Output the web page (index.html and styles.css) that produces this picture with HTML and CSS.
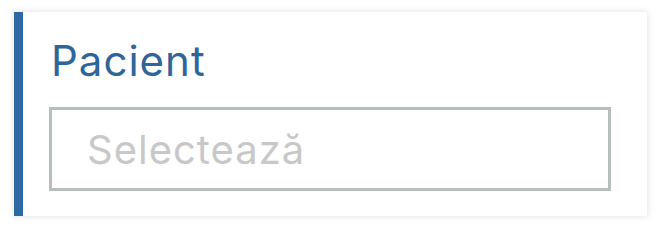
FILE: index.html
```html
<!DOCTYPE html>
<html lang="ro">
<head>
<meta charset="utf-8">
<link rel="stylesheet" href="styles.css">
</head>
<body>
<div class="card">
  <label class="label" for="pacient">Pacient</label>
  <div class="select" id="pacient">
    <span class="placeholder">Selectează</span>
  </div>
</div>
</body>
</html>
```
FILE: styles.css
```css
html, body {
  margin: 0;
  padding: 0;
  background: #ffffff;
}
body {
  font-family: Inter, "Liberation Sans", sans-serif;
  padding: 12px 11px 12px 14px;
}
.card {
  display: flex;
  flex-direction: column;
  gap: 21px;
  height: 204px;
  box-sizing: border-box;
  background: #ffffff;
  border-left: 9px solid #2f69a3;
  padding: 24px 36px 24px 26px;
  box-shadow: 0 0 6px 1px rgba(0, 0, 0, 0.1);
}
.label {
  display: block;
  padding-left: 2px;
  font-size: 42px;
  line-height: 50px;
  letter-spacing: 1px;
  color: #2e6699;
}
.select {
  height: 84px;
  box-sizing: border-box;
  border: 3px solid #b7bfbc;
  display: flex;
  align-items: center;
  padding-left: 35px;
}
.placeholder {
  font-size: 40px;
  letter-spacing: 1px;
  color: #c8c8c8;
}
```
